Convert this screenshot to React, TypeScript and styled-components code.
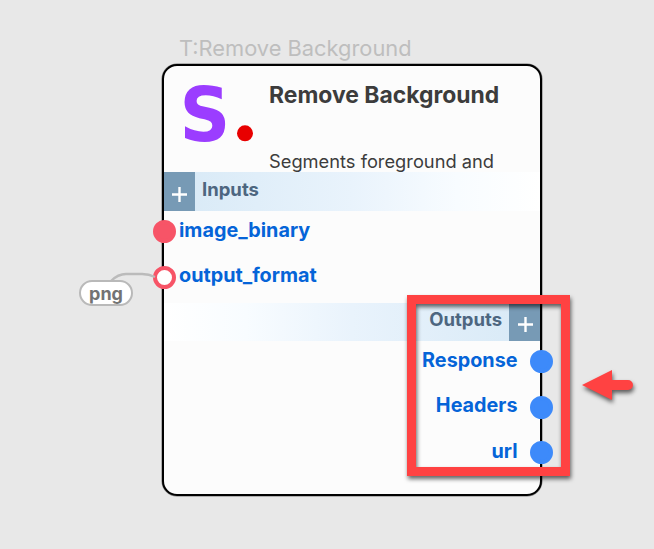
import React from 'react';
import styled, { createGlobalStyle } from 'styled-components';

const Global = createGlobalStyle`
  * { box-sizing: border-box; }
  body { margin: 0; background: #e8e8e8; font-family: Inter, "Liberation Sans", sans-serif; overflow: hidden; }
`;

const Canvas = styled.main`
  position: relative;
  width: 654px;
  height: 549px;
  padding: 35px 0 0 162px;
  background: #e8e8e8;
`;

const NodeTitle = styled.div`
  height: 29px;
  padding-left: 17px;
  font-size: 21.85px;
  line-height: 27px;
  color: #bebebe;
  white-space: nowrap;
`;

const Card = styled.section`
  width: 380px;
  height: 432px;
  border: 2px solid #000;
  border-radius: 15px;
  background: #fcfcfc;
  box-shadow: 0 0 0 0.5px #777;
`;

const Header = styled.header`
  display: flex;
  height: 106px;
  overflow: hidden;
`;

const Logo = styled.svg`
  flex: none;
  width: 105px;
  height: 106px;
`;

const HeaderText = styled.div`
  white-space: nowrap;
  color: #3c3c3c;
`;

const Name = styled.h1`
  margin: 15px 0 0;
  font-size: 22.9px;
  line-height: 28px;
  font-weight: 700;
`;

const Description = styled.p`
  margin: 41px 0 0;
  font-size: 18.3px;
  line-height: 22px;
`;

const Bar = styled.div<{ $end?: boolean }>`
  display: flex;
  flex-direction: ${p => (p.$end ? 'row-reverse' : 'row')};
  height: ${p => (p.$end ? 38 : 39)}px;
  background: linear-gradient(${p => (p.$end ? '270deg' : '90deg')}, #d7e9f6 0%, #e9f3fc 50%, #f8fcff 78%, #fff 100%);
`;

const AddButton = styled.button<{ $end?: boolean }>`
  flex: none;
  width: 31px;
  height: 100%;
  padding: 0;
  border: 0;
  background: #779ab5;
  svg { display: block; width: 31px; height: 38px; margin-left: ${p => (p.$end ? 1 : 0)}px; }
`;

const BarLabel = styled.span<{ $end?: boolean }>`
  margin: 0 7px;
  font-size: 18.5px;
  line-height: ${p => (p.$end ? 33 : 35)}px;
  font-weight: 700;
  color: #4d6680;
`;

const Ports = styled.div<{ $end?: boolean }>`
  height: ${p => (p.$end ? 138 : 92)}px;
`;

const PortLabel = styled.span`
  font-size: 19.8px;
  line-height: 38px;
  font-weight: 700;
  color: #0564d8;
`;

const Port = styled.div<{ $end?: boolean }>`
  display: flex;
  flex-direction: ${p => (p.$end ? 'row-reverse' : 'row')};
  height: 45.5px;
  &:nth-child(2) ${PortLabel} { line-height: 37px; }
`;

const Dot = styled.i<{ $kind: 'filled' | 'open' | 'out' }>`
  flex: none;
  width: 23px;
  height: 23px;
  margin: ${p => (p.$kind === 'out' ? '9px -12.5px 0 12px' : '9px 3px 0 -11px')};
  border: 4px solid ${p => (p.$kind === 'out' ? '#3d8afa' : '#f75467')};
  border-radius: 50%;
  background: ${p => ({ filled: '#f75467', open: '#fff', out: '#3d8afa' })[p.$kind]};
`;

const Wire = styled.svg`
  position: absolute;
  left: 104px;
  top: 266px;
  width: 52px;
  height: 20px;
`;

const ValueTag = styled.div`
  position: absolute;
  left: 79px;
  top: 280px;
  width: 54px;
  height: 26px;
  border: 2px solid #b9b9b9;
  border-radius: 13px;
  background: #fff;
  color: #737373;
  font-size: 18px;
  line-height: 24px;
  font-weight: 700;
  text-align: center;
  overflow: hidden;
`;

const Highlight = styled.div`
  position: absolute;
  left: 407px;
  top: 295px;
  width: 163px;
  height: 181px;
  border: 9px solid #ff4242;
  filter: drop-shadow(1px 3px 2px rgba(0, 0, 0, 0.6));
`;

const Arrow = styled.svg`
  position: absolute;
  left: 576px;
  top: 362px;
  width: 70px;
  height: 50px;
  filter: drop-shadow(1px 3px 2px rgba(0, 0, 0, 0.6));
`;

const Plus = () => (
  <svg viewBox="0 0 31 38">
    <path d="M8 21.5h15M15.5 14v15" stroke="#fff" strokeWidth="2.4" fill="none" />
  </svg>
);

const inputs = [
  { name: 'image_binary', kind: 'filled' as const },
  { name: 'output_format', kind: 'open' as const },
];
const outputs = ['Response', 'Headers', 'url'];

export default function App() {
  return (
    <Canvas>
      <Global />
      <NodeTitle>T:Remove Background</NodeTitle>
      <Card>
        <Header>
          <Logo viewBox="0 0 105 106">
            <text transform="translate(15.6 75.4) scale(0.94 1)" fontFamily="DejaVu Sans" fontWeight="700" fontSize="75" fill="#9b3dff">S</text>
            <circle cx="81" cy="67.3" r="8" fill="#e80000" />
          </Logo>
          <HeaderText>
            <Name>Remove Background</Name>
            <Description>Segments foreground and</Description>
          </HeaderText>
        </Header>
        <Bar>
          <AddButton aria-label="Add input"><Plus /></AddButton>
          <BarLabel>Inputs</BarLabel>
        </Bar>
        <Ports>
          {inputs.map(p => (
            <Port key={p.name}>
              <Dot $kind={p.kind} />
              <PortLabel>{p.name}</PortLabel>
            </Port>
          ))}
        </Ports>
        <Bar $end>
          <AddButton $end aria-label="Add output"><Plus /></AddButton>
          <BarLabel $end>Outputs</BarLabel>
        </Bar>
        <Ports $end>
          {outputs.map(name => (
            <Port $end key={name}>
              <Dot $kind="out" />
              <PortLabel>{name}</PortLabel>
            </Port>
          ))}
        </Ports>
      </Card>
      <Wire viewBox="0 0 52 20">
        <path d="M7 15C12 10 16 8 22 8h16c6 0 9 1 13 3" stroke="#bbb" strokeWidth="2.3" fill="none" />
      </Wire>
      <ValueTag>png</ValueTag>
      <Highlight />
      <Arrow viewBox="0 0 70 50">
        <path d="M6 23L36 8v10h16a5 5 0 0 1 0 10H36v10z" fill="#ff4242" />
      </Arrow>
    </Canvas>
  );
}
